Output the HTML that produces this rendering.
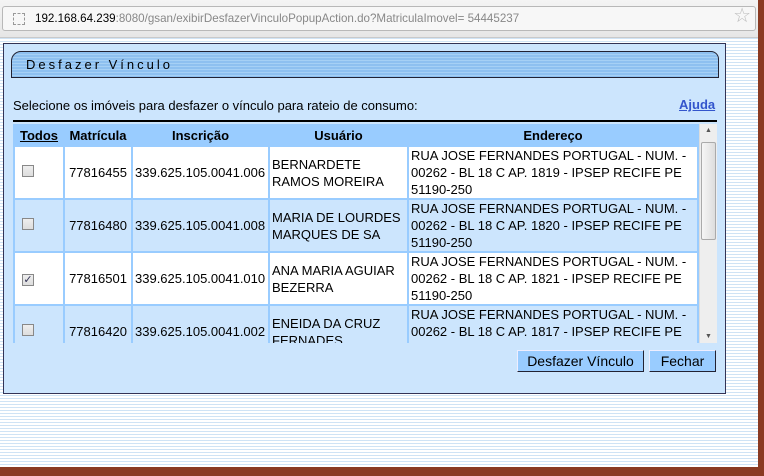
<!DOCTYPE html>
<html><head><style>
*{margin:0;padding:0;box-sizing:border-box}
body{width:764px;height:476px;overflow:hidden;background:#8a3a22;font-family:"Liberation Sans",Arial,sans-serif;position:relative}
#win{position:absolute;left:0;top:0;width:758px;height:467px;background:repeating-linear-gradient(#ffffff 0 2px,#cfe3f5 2px 3px);}
#chrome{position:absolute;left:0;top:0;width:758px;height:38px;background:linear-gradient(#f4f4f4,#e6e6e6);border-bottom:1px solid #c9c9c9}
#addr{position:absolute;left:2px;top:6px;width:754px;height:25px;background:#f7f7f7;border:1px solid #b8b8b8;border-radius:3px;font-size:11.6px;line-height:23px;padding-left:32px;color:#888}
#addr b{font-weight:normal;color:#000}
#ico{position:absolute;left:10px;top:6px;width:12px;height:12px;border:1px dashed #999}
#star{position:absolute;right:4px;top:-2px;font-size:20px;color:#bbb}
#panel{position:absolute;left:3px;top:43px;width:723px;height:351px;background:#cce5fd;border:1px solid #335;}
#title{position:absolute;left:7px;top:7px;width:708px;height:27px;border:1px solid #223;border-radius:10px 8px 0 0;background:repeating-linear-gradient(#8ec0f0 0 2px,#a6d0f5 2px 3px);font-size:13px;letter-spacing:3px;padding-left:14px;line-height:26px;color:#000}
#sel{position:absolute;left:9px;top:54px;font-size:13px}
#aj{position:absolute;left:675px;top:53px;font-size:13px;font-weight:bold;color:#3355cc;text-decoration:underline}
#line{position:absolute;left:9px;top:76px;width:704px;height:2px;background:#000}
#tbl{position:absolute;left:9px;top:80px;width:686px;height:219px;overflow:hidden;background:#99ccff}
table{border-collapse:separate;border-spacing:2px;font-size:13px;position:absolute;left:0;top:0;width:686px;table-layout:fixed}
th{height:19px;font-size:13px;font-weight:bold;background:#99ccff}
td{height:50px;padding:0 2px;vertical-align:middle;line-height:17px;white-space:nowrap;overflow:hidden}
tr.w td{background:#fff}tr.b td{background:#cce5fd}
.cb{display:inline-block;width:12px;height:12px;border:1px solid #888;background:linear-gradient(#eee,#ddd);margin-left:5px;font-size:11px;line-height:10px;color:#335;text-align:center}
td.c{text-align:center}
#sb{position:absolute;left:695px;top:80px;width:18px;height:219px;background:#eee;border-left:1px solid #ddd}
#thumb{position:absolute;left:1px;top:18px;width:15px;height:98px;background:linear-gradient(90deg,#f6f6f6,#ddd);border:1px solid #aaa;border-radius:2px}
.btn{position:absolute;top:306px;height:22px;background:#99ccff;border:1px solid #223;border-top-color:#eef;border-left-color:#eef;font-size:14px;text-align:center;line-height:20px}
</style></head><body>
<div id="win">
<div id="chrome"><div id="addr"><span id="ico"></span><b>192.168.64.239</b>:8080/gsan/exibirDesfazerVinculoPopupAction.do?MatriculaImovel= 54445237<span id="star">☆</span></div></div>
<div id="panel">
<div id="title">Desfazer Vínculo</div>
<div id="sel">Selecione os imóveis para desfazer o vínculo para rateio de consumo:</div>
<div id="aj">Ajuda</div>
<div id="line"></div>
<div id="tbl"><table>
<colgroup><col style="width:48px"><col style="width:66px"><col style="width:135px"><col style="width:137px"><col></colgroup>
<tr><th><u>Todos</u></th><th>Matrícula</th><th>Inscrição</th><th>Usuário</th><th>Endereço</th></tr>
<tr class="w"><td><span class="cb"></span></td><td class="c">77816455</td><td>339.625.105.0041.006</td><td>BERNARDETE<br>RAMOS MOREIRA</td><td>RUA JOSE FERNANDES PORTUGAL - NUM. -<br>00262 - BL 18 C AP. 1819 - IPSEP RECIFE PE<br>51190-250</td></tr>
<tr class="b"><td><span class="cb"></span></td><td class="c">77816480</td><td>339.625.105.0041.008</td><td>MARIA DE LOURDES<br>MARQUES DE SA</td><td>RUA JOSE FERNANDES PORTUGAL - NUM. -<br>00262 - BL 18 C AP. 1820 - IPSEP RECIFE PE<br>51190-250</td></tr>
<tr class="w"><td><span class="cb">✓</span></td><td class="c">77816501</td><td>339.625.105.0041.010</td><td>ANA MARIA AGUIAR<br>BEZERRA</td><td>RUA JOSE FERNANDES PORTUGAL - NUM. -<br>00262 - BL 18 C AP. 1821 - IPSEP RECIFE PE<br>51190-250</td></tr>
<tr class="b"><td><span class="cb"></span></td><td class="c">77816420</td><td>339.625.105.0041.002</td><td>ENEIDA DA CRUZ<br>FERNADES</td><td>RUA JOSE FERNANDES PORTUGAL - NUM. -<br>00262 - BL 18 C AP. 1817 - IPSEP RECIFE PE<br>51190-250</td></tr>
</table></div>
<div id="sb"><div style="font-size:7px;color:#555;text-align:center;margin-top:3px">▲</div><div id="thumb"></div><div style="position:absolute;bottom:3px;width:100%;font-size:7px;color:#555;text-align:center">▼</div></div>
<div class="btn" style="left:513px;width:127px">Desfazer Vínculo</div>
<div class="btn" style="left:645px;width:67px">Fechar</div>
</div>
</div>
</body></html>
